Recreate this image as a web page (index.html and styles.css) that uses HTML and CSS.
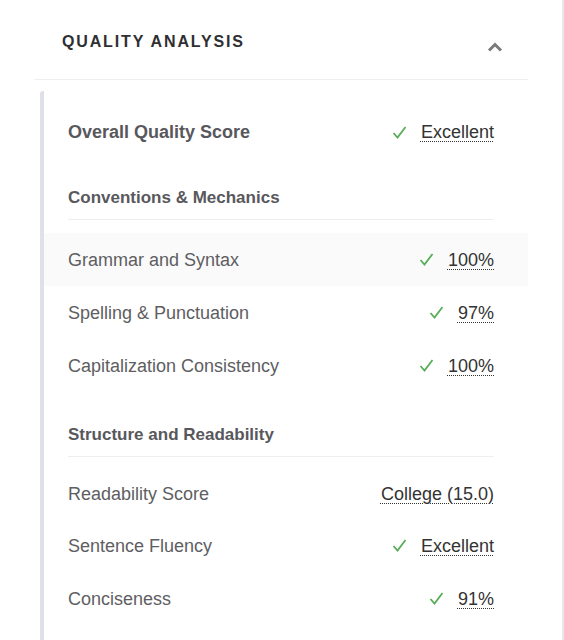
FILE: index.html
```html
<!DOCTYPE html>
<html lang="en">
  <head>
    <meta charset="UTF-8" />
    <meta name="viewport" content="width=device-width, initial-scale=1.0" />
    <title>Quality Analysis</title>
    <link rel="stylesheet" href="styles.css">
  </head>
  <body>
    <div class="panel">
      <!-- Panel header -->
      <header class="panel-header">
        <h2 class="panel-title">QUALITY ANALYSIS</h2>
        <svg class="chevron" width="16" height="10" viewBox="0 0 16 10">
          <polyline points="2,8.5 8,2.5 14,8.5" fill="none" stroke="#7a7a7a" stroke-width="3" />
        </svg>
      </header>

      <!-- Analysis body -->
      <div class="panel-body">
        <div class="row row-overall">
          <span class="label">Overall Quality Score</span>
          <span class="value">
            <svg class="check" viewBox="0 0 14 13"><polyline points="1,7 5,11.5 13,1" /></svg>
            <span class="score">Excellent</span>
          </span>
        </div>

        <h3 class="section-title">Conventions &amp; Mechanics</h3>
        <ul class="rows">
          <li class="row row-active">
            <span class="label">Grammar and Syntax</span>
            <span class="value">
              <svg class="check" viewBox="0 0 14 13"><polyline points="1,7 5,11.5 13,1" /></svg>
              <span class="score">100%</span>
            </span>
          </li>
          <li class="row">
            <span class="label">Spelling &amp; Punctuation</span>
            <span class="value">
              <svg class="check" viewBox="0 0 14 13"><polyline points="1,7 5,11.5 13,1" /></svg>
              <span class="score">97%</span>
            </span>
          </li>
          <li class="row">
            <span class="label">Capitalization Consistency</span>
            <span class="value">
              <svg class="check" viewBox="0 0 14 13"><polyline points="1,7 5,11.5 13,1" /></svg>
              <span class="score">100%</span>
            </span>
          </li>
        </ul>

        <h3 class="section-title section-second">Structure and Readability</h3>
        <ul class="rows">
          <li class="row">
            <span class="label">Readability Score</span>
            <span class="value">
              <span class="score">College (15.0)</span>
            </span>
          </li>
          <li class="row">
            <span class="label">Sentence Fluency</span>
            <span class="value">
              <svg class="check" viewBox="0 0 14 13"><polyline points="1,7 5,11.5 13,1" /></svg>
              <span class="score">Excellent</span>
            </span>
          </li>
          <li class="row">
            <span class="label">Conciseness</span>
            <span class="value">
              <svg class="check" viewBox="0 0 14 13"><polyline points="1,7 5,11.5 13,1" /></svg>
              <span class="score">91%</span>
            </span>
          </li>
        </ul>
      </div>
    </div>
  </body>
</html>
```

FILE: styles.css
```css
/* General Styling */
* {
  box-sizing: border-box;
  margin: 0;
  padding: 0;
}

body {
  font-family: "Liberation Sans", Arial, sans-serif;
  background-color: #fff;
  color: #333;
}

.panel {
  width: 564px;
  height: 640px;
  overflow: hidden;
  border-right: 2px solid #e9e9ec;
}

/* Header */
.panel-header {
  display: flex;
  justify-content: space-between;
  align-items: flex-start;
  margin: 0 34px 0 35px;
  padding: 32px 25px 27px 27px;
  border-bottom: 1px solid #eeeeee;
}

.panel-title {
  font-size: 16px;
  line-height: 20px;
  font-weight: bold;
  letter-spacing: 1.85px;
  color: #2f2f33;
}

.chevron {
  margin-top: 10px;
}

/* Body with left rail */
.panel-body {
  margin: 11px 34px 0 40px;
  padding-top: 14px;
  border-left: 4px solid #dfe1e8;
  border-top-left-radius: 3px;
  min-height: 600px;
}

.rows {
  list-style-type: none;
  margin-top: 13px;
}

.row {
  display: flex;
  justify-content: space-between;
  align-items: center;
  padding: 15px 34px 15px 24px;
  font-size: 18px;
  line-height: 20px;
}

.row-active {
  background: #fafafa;
}

.row-overall .label {
  font-weight: bold;
  line-height: 24px;
  color: #58585c;
}

.label {
  color: #5e5e62;
}

.value {
  display: flex;
  align-items: center;
  gap: 14px;
}

.check {
  width: 15px;
  height: 13px;
  margin: 5px 0;
  fill: none;
  stroke: #57ad58;
  stroke-width: 1.8;
}

.score {
  color: #333;
  text-decoration: underline dotted #333;
  text-decoration-thickness: 1px;
  text-underline-offset: 3px;
}

/* Section headings */
.section-title {
  margin: 29px 34px 0 24px;
  padding-bottom: 11px;
  font-size: 17px;
  line-height: 20px;
  font-weight: bold;
  color: #58585c;
  border-bottom: 1px solid #eeeeee;
}

.section-second {
  margin-top: 33px;
}

.section-second + .rows {
  margin-top: 12px;
}
```
